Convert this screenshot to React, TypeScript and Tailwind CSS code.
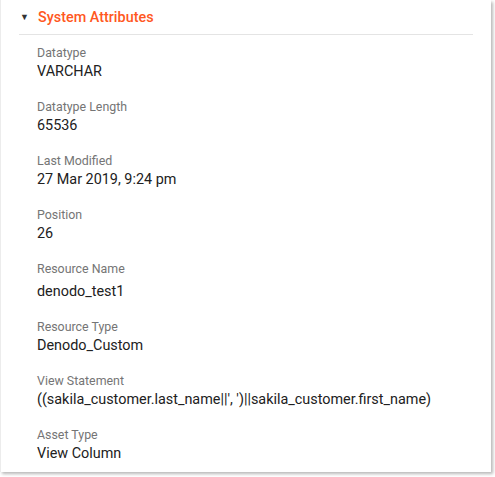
const attributes: { label: string; value: string; spaced?: boolean }[] = [
  { label: "Datatype", value: "VARCHAR" },
  { label: "Datatype Length", value: "65536" },
  { label: "Last Modified", value: "27 Mar 2019, 9:24 pm" },
  { label: "Position", value: "26" },
  { label: "Resource Name", value: "denodo_test1", spaced: true },
  { label: "Resource Type", value: "Denodo_Custom" },
  { label: "View Statement", value: "((sakila_customer.last_name||', ')||sakila_customer.first_name)" },
  { label: "Asset Type", value: "View Column" },
];

const App = () => {
  return (
    <div className="h-[477px] w-[495px] bg-white font-['Roboto','Liberation_Sans',sans-serif]">
      <div className="h-[472px] w-[491px] border-l border-[#ececec] bg-white px-[18px] shadow-[2px_2px_3px_rgba(0,0,0,0.28)]">
        <div className="flex h-[35px] items-center border-b border-[#e4e4e4] pt-[1px]">
          <span className="ml-[1px] w-[18px] text-[9px] leading-none text-[#333]">▼</span>
          <span className="text-[14.4px] font-medium text-[#ff5722]">System Attributes</span>
        </div>
        <div className="flex flex-col gap-[16px] pl-[18px] pt-[9px]">
          {attributes.map((a) => (
            <div key={a.label} className="flex flex-col">
              <span className="text-[12.4px] leading-[18px] text-[#757575]">{a.label}</span>
              <span className={a.spaced ? "mt-[4px] text-[14.4px] leading-5 text-[#212121]" : "text-[14.4px] leading-5 text-[#212121]"}>
                {a.value}
              </span>
            </div>
          ))}
        </div>
      </div>
    </div>
  );
};

export default App;
